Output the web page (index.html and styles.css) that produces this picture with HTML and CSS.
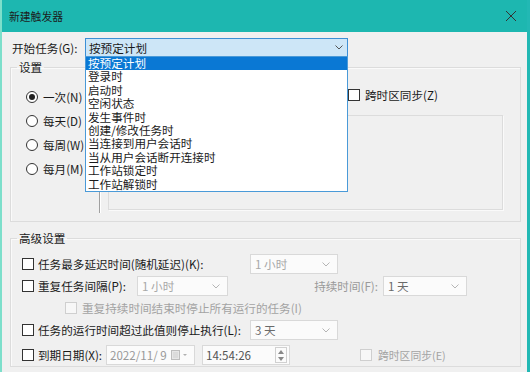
FILE: index.html
```html
<!DOCTYPE html>
<html lang="zh-CN">
<head>
  <meta charset="UTF-8">
  <title>新建触发器</title>
  <link rel="stylesheet" href="styles.css">
</head>
<body>
  <div class="window">
    <!-- Title bar -->
    <div class="titlebar">
      <span class="title">新建触发器</span>
      <svg class="close" width="12" height="12" viewBox="0 0 12 12">
        <path d="M1 1 L11 11 M11 1 L1 11" stroke="#333" stroke-width="1" fill="none"/>
      </svg>
    </div>

    <div class="content">
      <!-- Start task row with open dropdown -->
      <div class="start-row">
        <span class="start-label">开始任务(G):</span>
        <div class="combo combo-open">
          <span class="combo-text">按预定计划</span>
          <svg class="chevron" width="8" height="5" viewBox="0 0 8 5">
            <path d="M0.5 0.5 L4 4 L7.5 0.5" stroke="#555" fill="none"/>
          </svg>
          <ul class="dropdown">
            <li class="selected">按预定计划</li>
            <li>登录时</li>
            <li>启动时</li>
            <li>空闲状态</li>
            <li>发生事件时</li>
            <li>创建/修改任务时</li>
            <li>当连接到用户会话时</li>
            <li>当从用户会话断开连接时</li>
            <li>工作站锁定时</li>
            <li>工作站解锁时</li>
          </ul>
        </div>
      </div>

      <!-- Settings group -->
      <fieldset class="group">
        <legend>设置</legend>
        <div class="settings-body">
          <div class="radio-col">
            <label class="radio-row"><span class="radio checked"></span>一次(N)</label>
            <label class="radio-row"><span class="radio"></span>每天(D)</label>
            <label class="radio-row"><span class="radio"></span>每周(W)</label>
            <label class="radio-row"><span class="radio"></span>每月(M)</label>
          </div>
          <div class="separator"></div>
          <div class="settings-right">
            <label class="check-row tz-row"><span class="checkbox"></span>跨时区同步(Z)</label>
            <div class="inner-box"></div>
          </div>
        </div>
      </fieldset>

      <!-- Advanced settings group -->
      <fieldset class="group group-advanced">
        <legend>高级设置</legend>
        <div class="adv-body">
          <div class="adv-row">
            <span class="checkbox"></span>
            <span class="adv-label w-long">任务最多延迟时间(随机延迟)(K):</span>
            <div class="combo combo-disabled w-88">
              <span class="combo-text">1 小时</span>
              <svg class="chevron" width="8" height="5" viewBox="0 0 8 5"><path d="M0.5 0.5 L4 4 L7.5 0.5" stroke="#b5b5b5" fill="none"/></svg>
            </div>
          </div>
          <div class="adv-row">
            <span class="checkbox"></span>
            <span class="adv-label w-repeat">重复任务间隔(P):</span>
            <div class="combo combo-disabled w-91">
              <span class="combo-text">1 小时</span>
              <svg class="chevron" width="8" height="5" viewBox="0 0 8 5"><path d="M0.5 0.5 L4 4 L7.5 0.5" stroke="#b5b5b5" fill="none"/></svg>
            </div>
            <span class="adv-label muted duration">持续时间(F):</span>
            <div class="combo combo-disabled dark w-84">
              <span class="combo-text">1 天</span>
              <svg class="chevron" width="8" height="5" viewBox="0 0 8 5"><path d="M0.5 0.5 L4 4 L7.5 0.5" stroke="#b5b5b5" fill="none"/></svg>
            </div>
          </div>
          <div class="adv-row indent">
            <span class="checkbox disabled"></span>
            <span class="adv-label muted">重复持续时间结束时停止所有运行的任务(I)</span>
          </div>
          <div class="adv-row">
            <span class="checkbox"></span>
            <span class="adv-label w-long">任务的运行时间超过此值则停止执行(L):</span>
            <div class="combo combo-disabled dark w-88">
              <span class="combo-text">3 天</span>
              <svg class="chevron" width="8" height="5" viewBox="0 0 8 5"><path d="M0.5 0.5 L4 4 L7.5 0.5" stroke="#b5b5b5" fill="none"/></svg>
            </div>
          </div>
          <div class="adv-row last">
            <span class="checkbox"></span>
            <span class="adv-label w-expire">到期日期(X):</span>
            <div class="picker date">
              <span class="picker-text">2022/11/ 9</span>
              <svg class="cal" width="18" height="10" viewBox="0 0 18 10">
                <rect x="0.5" y="0.5" width="8" height="9" fill="#e6e6e6" stroke="#bdbdbd"/>
                <path d="M2 3 H7 M2 5 H7 M2 7 H7" stroke="#cfcfcf"/>
                <path d="M12 4 L14 6 L16 4 Z" fill="#b0b0b0"/>
              </svg>
            </div>
            <div class="picker time">
              <span class="picker-text">14:54:26</span>
              <div class="spin">
                <svg width="6" height="4" viewBox="0 0 6 4"><path d="M0 4 L3 0 L6 4 Z" fill="#888"/></svg>
                <svg width="6" height="4" viewBox="0 0 6 4"><path d="M0 0 L3 4 L6 0 Z" fill="#888"/></svg>
              </div>
            </div>
            <span class="checkbox disabled tz2"></span>
            <span class="adv-label muted small">跨时区同步(E)</span>
          </div>
        </div>
      </fieldset>
    </div>
  </div>
</body>
</html>
```

FILE: styles.css
```css
body {
  margin: 0;
  font-family: "Noto Sans CJK SC", "Noto Sans", sans-serif;
  font-size: 11.6px;
  color: #1a1a1a;
}

.window {
  width: 530px;
  height: 372px;
  overflow: hidden;
  box-sizing: border-box;
  background-color: #f0f0f0;
  border-left: 2px solid #7ddfcb;
  border-right: 3px solid #22b8b4;
}

/* Title bar */
.titlebar {
  height: 32px;
  display: flex;
  align-items: center;
  justify-content: space-between;
  background-color: #1db7b0;
  padding: 0 10px 0 7px;
}

.title {
  font-size: 10.8px;
  color: #1c1c1c;
}

.content {
  padding: 0 6px 0 8px;
}

/* Start task row */
.start-row {
  display: flex;
  align-items: center;
  height: 19px;
  margin-top: 6px;
}

.start-label {
  width: 73px;
  margin-left: 2px;
}

.combo {
  position: relative;
  box-sizing: border-box;
  display: flex;
  align-items: center;
  justify-content: space-between;
  height: 20px;
  padding: 0 7px 0 4px;
  border: 1px solid #d9d9d9;
  background-color: #fbfbfb;
}

.combo-open {
  width: 263px;
  height: 19px;
  padding: 0 4px 0 3px;
  border-color: #3c8fd6;
  background-color: #cde6f7;
}

.dropdown {
  position: absolute;
  top: 17px;
  left: -1px;
  width: 263px;
  height: 136px;
  box-sizing: border-box;
  margin: 0;
  padding: 0;
  list-style: none;
  background-color: #fff;
  border: 1px solid #4a9ad8;
  z-index: 5;
}

.dropdown li {
  height: 13.4px;
  line-height: 13.4px;
  padding-left: 2px;
  white-space: nowrap;
}

.dropdown li.selected {
  background-color: #0a78d4;
  color: #fff;
}

/* Group boxes */
.group {
  margin: 3px 0 0 0;
  padding: 0;
  border: 1px solid #dcdcdc;
  box-shadow: inset 1px 1px 0 #fafafa;
  min-inline-size: 0;
}

.group legend {
  margin-left: 6px;
  padding: 0 2px;
  line-height: 14px;
}

.settings-body {
  display: flex;
  height: 147px;
}

.radio-col {
  width: 73px;
  padding: 11px 0 0 15px;
}

.radio-row {
  display: flex;
  align-items: center;
  height: 24px;
}

.radio {
  box-sizing: border-box;
  width: 12px;
  height: 12px;
  margin-right: 5px;
  border: 1px solid #333;
  border-radius: 50%;
  background-color: #fff;
  display: flex;
  align-items: center;
  justify-content: center;
}

.radio.checked::after {
  content: "";
  width: 6px;
  height: 6px;
  border-radius: 50%;
  background-color: #222;
}

.separator {
  width: 1px;
  height: 135px;
  margin-top: 4px;
  background-color: #a0a0a0;
  border-right: 1px solid #fff;
}

.settings-right {
  padding: 15px 0 0 7px;
}

.check-row {
  display: flex;
  align-items: center;
  height: 12px;
}

.tz-row {
  margin-left: 240px;
}

.checkbox {
  box-sizing: border-box;
  flex: none;
  width: 12px;
  height: 12px;
  margin-right: 5px;
  border: 1px solid #333;
  background-color: #fff;
}

.checkbox.disabled {
  border-color: #cfcfcf;
  background-color: #f7f7f7;
}

.inner-box {
  box-sizing: border-box;
  width: 395px;
  height: 95px;
  margin-top: 14px;
  border: 1px solid #dcdcdc;
  box-shadow: 1px 1px 0 #fafafa;
}

/* Advanced settings */
.group-advanced {
  margin-top: 9px;
}

.adv-body {
  padding: 8px 0 0 11px;
}

.adv-row {
  display: flex;
  align-items: center;
  height: 22px;
}

.adv-row .checkbox {
  margin-right: 4px;
}

.adv-row.indent {
  padding-left: 43px;
}

.adv-row.indent .checkbox {
  margin-right: 5px;
}

.adv-row.last {
  margin-top: 3px;
}

.adv-label {
  white-space: nowrap;
}

.w-long { width: 212px; }
.w-repeat { width: 99px; }
.w-expire { width: 68px; }

.w-88 { width: 88px; }
.w-91 { width: 91px; }
.w-84 { width: 84px; }

.muted {
  color: #a3a3a3;
}

.small {
  font-size: 10.8px;
}

.duration {
  width: 150px;
  padding-right: 5px;
  text-align: right;
  color: #9a9a9a;
}

.combo-disabled .combo-text {
  color: #a8a8a8;
}

.combo-disabled.dark .combo-text {
  color: #6a6a6a;
}

/* Date and time pickers */
.picker {
  box-sizing: border-box;
  height: 20px;
  display: flex;
  align-items: center;
  justify-content: space-between;
  border: 1px solid #d9d9d9;
  background-color: #fbfbfb;
  padding: 0 2px 0 3px;
}

.picker-text {
  white-space: pre;
}

.picker.date {
  width: 89px;
  padding-right: 5px;
}

.picker.date .picker-text {
  color: #999;
}

.picker.time {
  width: 88px;
  margin-left: 7px;
}

.picker.time .picker-text {
  color: #555;
}

.spin {
  box-sizing: border-box;
  width: 12px;
  height: 16px;
  border: 1px solid #d0d0d0;
  display: flex;
  flex-direction: column;
  align-items: center;
  justify-content: space-around;
}

.checkbox.tz2 {
  margin-left: 70px;
  margin-right: 6px;
}
```
